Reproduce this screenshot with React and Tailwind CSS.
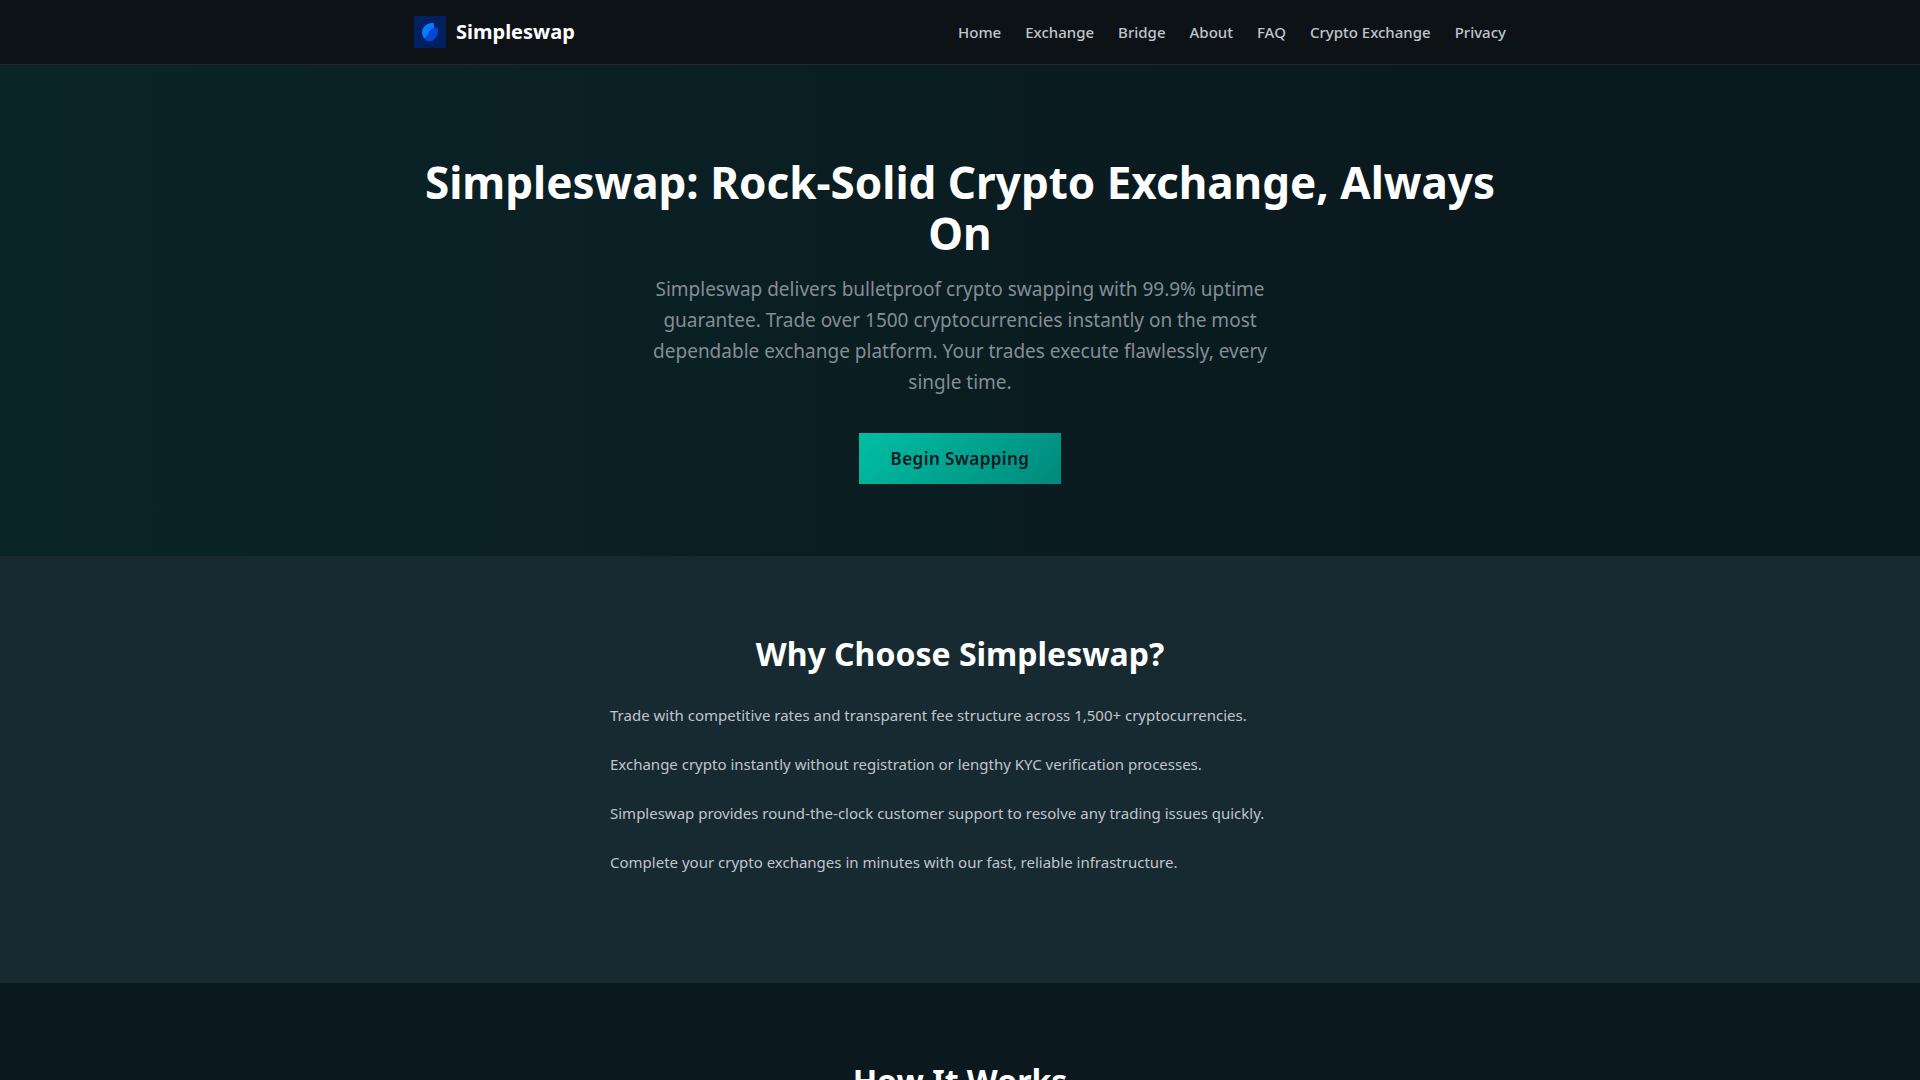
const links = ["Home", "Exchange", "Bridge", "About", "FAQ", "Crypto Exchange", "Privacy"];

const reasons = [
  "Trade with competitive rates and transparent fee structure across 1,500+ cryptocurrencies.",
  "Exchange crypto instantly without registration or lengthy KYC verification processes.",
  "Simpleswap provides round-the-clock customer support to resolve any trading issues quickly.",
  "Complete your crypto exchanges in minutes with our fast, reliable infrastructure.",
];

function Logo() {
  return (
    <svg className="w-8 h-8" viewBox="0 0 32 32" aria-hidden="true">
      <rect width="32" height="32" fill="#00205f" />
      <path
        d="M19.8 7C15.6 6.6 12.4 8 10.2 10.6C7.6 13.8 7.4 18.4 9.4 21.4C10 22.4 11 22.6 11.6 22.2L15 17C16.4 14.4 18 12.6 20.6 11.6C19.6 10.4 20 8.6 19.8 7Z"
        fill="#0a78ff"
      />
      <path
        d="M10.6 22.4C12 25.4 16.8 26.8 20 23.4C22.6 20.6 24.6 17.6 24.2 14.4C24 12 22.2 11.2 20.2 11.8C16.8 12.8 14.8 15.4 14.4 18.2C14 20.4 12.6 21.8 10.6 22.4Z"
        fill="#0347d8"
      />
    </svg>
  );
}

function Header() {
  return (
    <header className="bg-[#0d1216] border-b border-[#23272d]">
      <div className="max-w-[1140px] h-16 mx-auto px-6 flex items-center justify-between">
        <a href="#" className="flex items-center gap-2.5 text-xl font-bold text-white">
          <Logo />
          Simpleswap
        </a>
        <nav className="flex gap-6 text-[15px] font-medium text-[#c0c5cc]">
          {links.map((link) => (
            <a key={link} href="#" className="hover:text-white">
              {link}
            </a>
          ))}
        </nav>
      </div>
    </header>
  );
}

function Hero() {
  return (
    <section className="bg-linear-to-r from-[#0a2528] to-[#0a191e] to-75% pt-[92px] pb-[72px]">
      <div className="max-w-[1140px] mx-auto px-6 flex flex-col items-center text-center">
        <h1 className="text-[44px] leading-[51px] font-bold text-white">
          Simpleswap: Rock-Solid Crypto Exchange, Always On
        </h1>
        <p className="max-w-[640px] mt-[15px] text-[19px] leading-[31px] text-[#858d96]">
          Simpleswap delivers bulletproof crypto swapping with 99.9% uptime guarantee. Trade over
          1500 cryptocurrencies instantly on the most dependable exchange platform. Your trades
          execute flawlessly, every single time.
        </p>
        <button
          type="button"
          className="mt-[35px] px-8 h-[51px] bg-linear-135 from-[#00bfa5] to-[#00897b] text-[17px] leading-6 font-semibold tracking-wide text-[#0a191e]"
        >
          Begin Swapping
        </button>
      </div>
    </section>
  );
}

function Reasons() {
  return (
    <section className="bg-[#172a31] py-20">
      <div className="max-w-[748px] mx-auto px-6">
        <h2 className="text-[32px] leading-[35px] font-bold text-white text-center">
          Why Choose Simpleswap?
        </h2>
        <ul className="mt-5 mb-4 text-[15px] leading-6 text-[#c0c5cc]">
          {reasons.map((reason) => (
            <li key={reason} className="py-3 border-b border-[#202831]">
              {reason}
            </li>
          ))}
        </ul>
      </div>
    </section>
  );
}

function HowItWorks() {
  return (
    <section className="bg-[#0b191e] py-20">
      <h2 className="text-[32px] leading-[35px] font-bold text-white text-center">How It Works</h2>
    </section>
  );
}

function App() {
  return (
    <div className="min-h-screen bg-[#0b191e] font-['Noto_Sans',sans-serif]">
      <Header />
      <main>
        <Hero />
        <Reasons />
        <HowItWorks />
      </main>
    </div>
  );
}

export default App;
